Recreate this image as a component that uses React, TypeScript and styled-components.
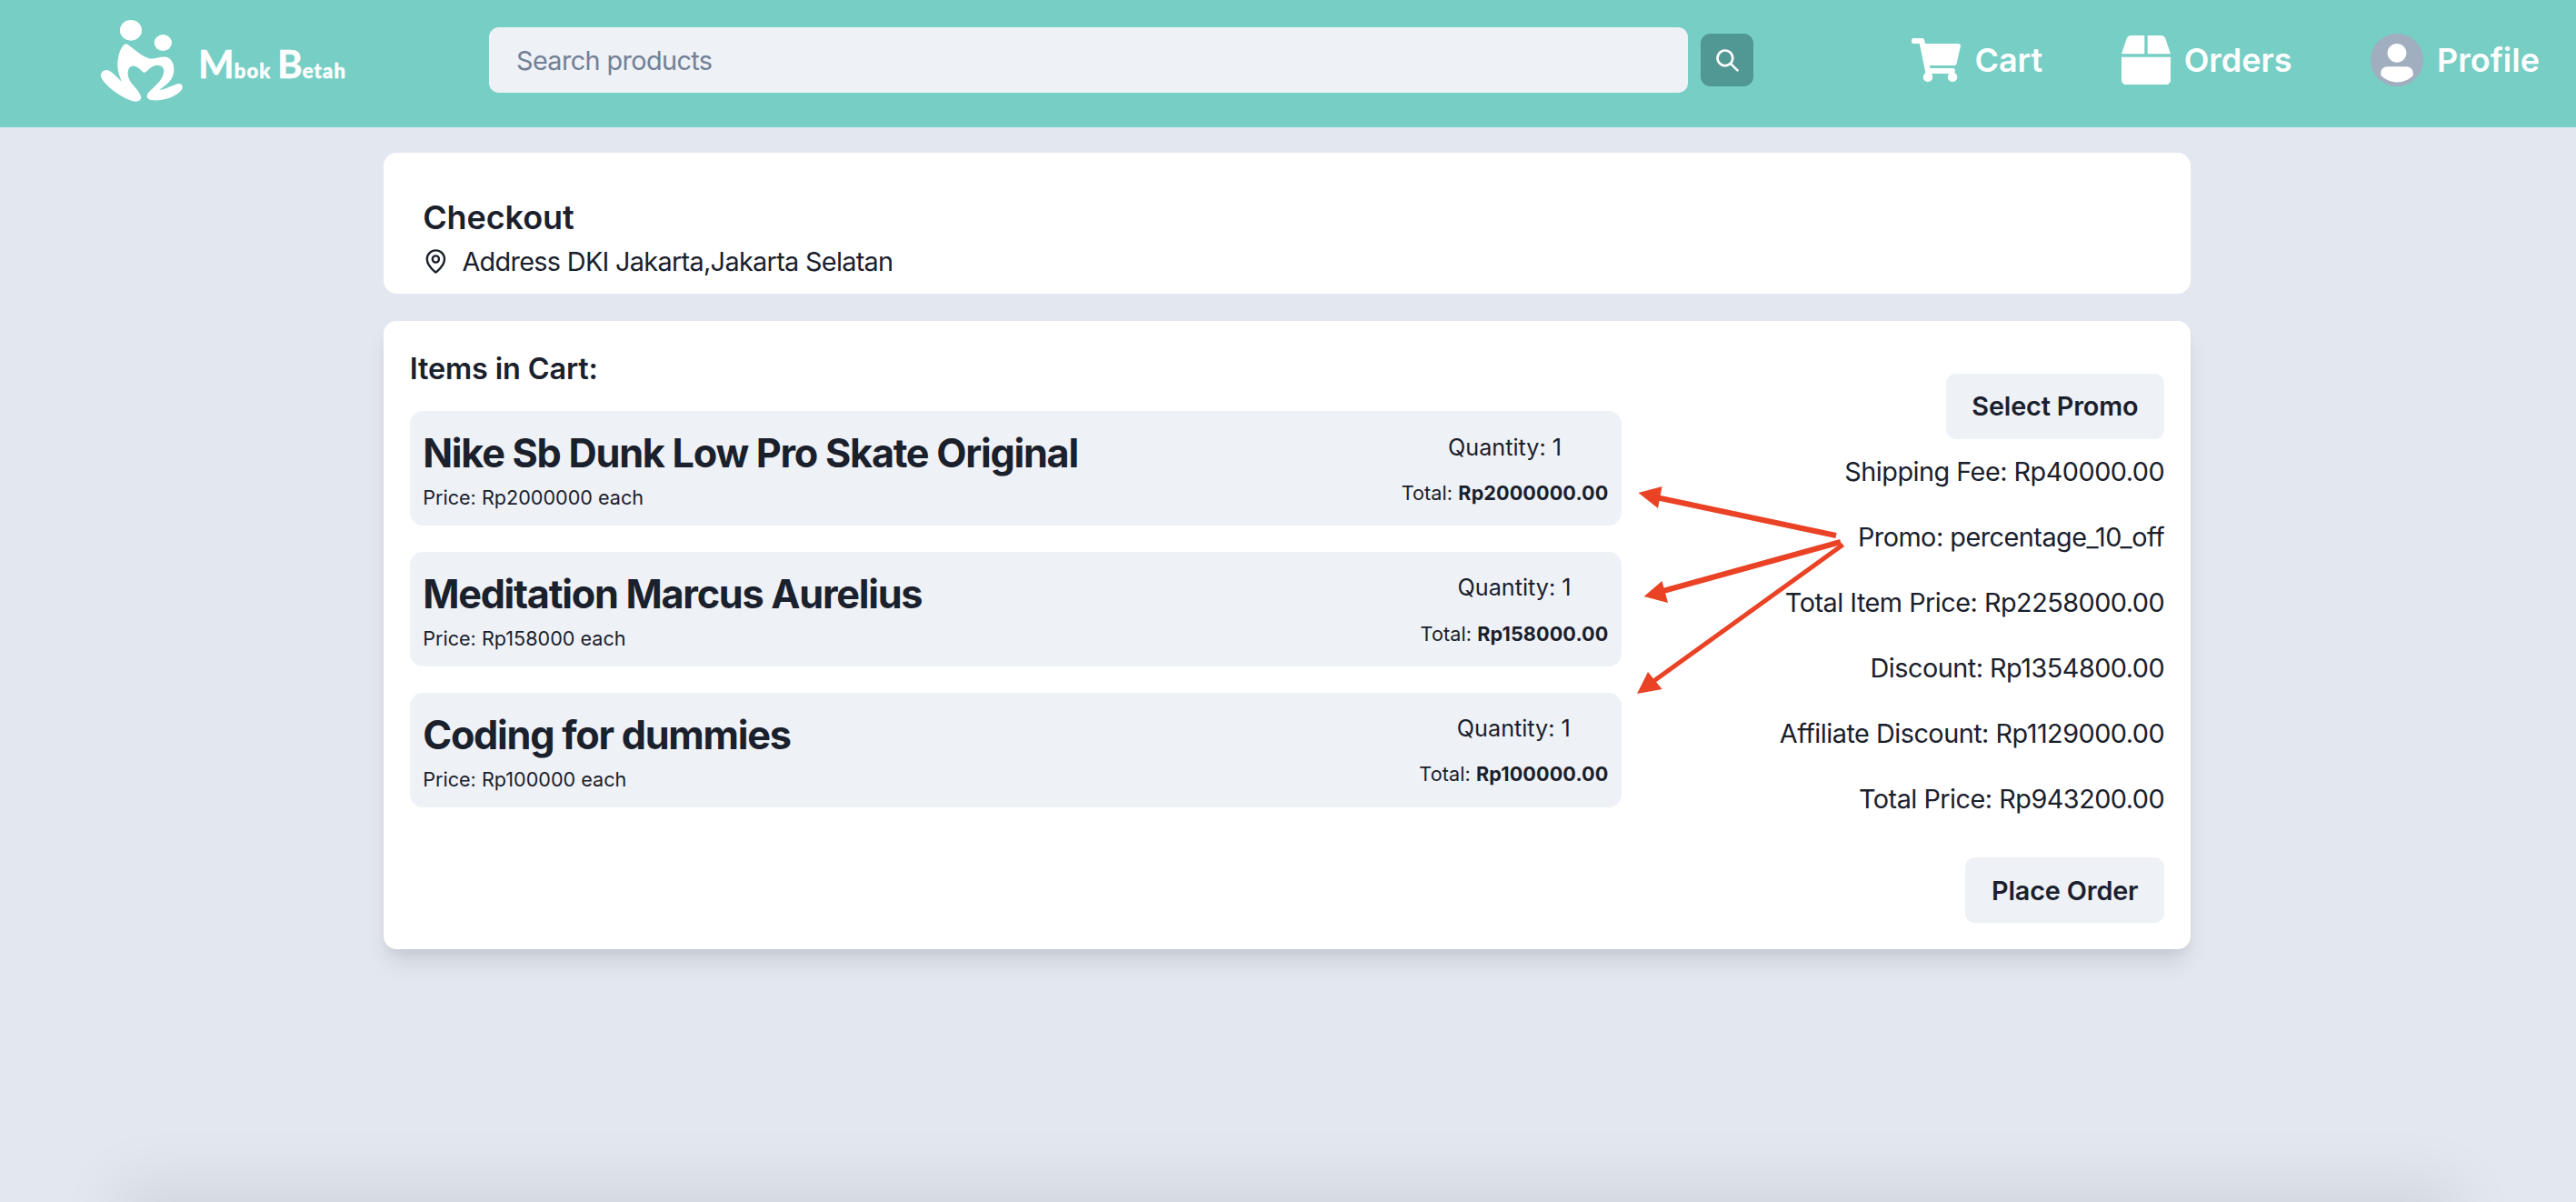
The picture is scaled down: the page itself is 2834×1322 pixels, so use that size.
import React from "react";
import styled, { createGlobalStyle } from "styled-components";
import { MapPin } from "lucide-react";
import { FaShoppingCart, FaBox } from "react-icons/fa";

const Global = createGlobalStyle`
  html, body { margin: 0; padding: 0; background: #e2e7f0; }
  body { font-family: Inter, "Liberation Sans", sans-serif; color: #1a202c; }
  * { box-sizing: border-box; }
`;

const Shell = styled.div`
  position: relative;
  height: 1322px;
  overflow: hidden;
  background: #e2e7f0;
`;
const Header = styled.header`
  display: flex;
  align-items: center;
  height: 140px;
  padding: 0 40px 8px 0;
  background: #76cec5;
`;
const Brand = styled.div`
  flex: 0 0 538px;
  display: flex;
  align-items: center;
  height: 110px;
  padding-left: 100px;
`;
const LogoMark = styled.svg`
  flex: none;
  width: 130px;
  height: 110px;
  fill: #fff;
`;
const Wordmark = styled.span`
  margin: 8px 0 0 -12px;
  font-family: Lato, sans-serif;
  font-weight: 900;
  font-size: 22px;
  letter-spacing: 1.2px;
  line-height: 1;
  color: #fff;
  white-space: nowrap;
  -webkit-text-stroke: 0.5px #fff;
`;
const WordCap = styled.span`
  font-size: 42px;
  font-weight: 700;
  letter-spacing: 0;
`;
const SearchGroup = styled.div`
  display: flex;
  align-items: center;
  gap: 14px;
`;
const SearchInput = styled.input`
  width: 1319px;
  height: 72px;
  padding: 0 30px;
  border: 0;
  border-radius: 10.8px;
  outline: none;
  background: #eef1f6;
  font: 400 28.8px Inter, sans-serif;
  letter-spacing: -0.6px;
  color: #1a202c;
  &::placeholder { color: #718096; opacity: 1; }
`;
const SearchButton = styled.button`
  display: flex;
  align-items: center;
  justify-content: center;
  width: 58px;
  height: 58px;
  padding: 0;
  border: 0;
  border-radius: 10.8px;
  background: #519793;
  color: #fff;
`;
const Nav = styled.nav`
  display: flex;
  align-items: center;
  gap: 86.4px;
  margin-left: auto;
`;
const NavItem = styled.a`
  display: flex;
  align-items: center;
  gap: 15px;
  font-size: 36px;
  font-weight: 600;
  line-height: 54px;
  color: #fff;
`;
const Avatar = styled.span`
  display: flex;
  width: 58px;
  height: 58px;
  overflow: hidden;
  border-radius: 50%;
  background: #a0aec0;
`;
const Main = styled.main`
  display: flex;
  flex-direction: column;
  gap: 30px;
  width: 1988px;
  height: 1182px;
  margin: 0 0 0 422px;
  padding-top: 28px;
`;
const AddressCard = styled.section`
  height: 155px;
  padding: 47px 43.2px 14.4px;
  border-radius: 14.4px;
  background: #fff;
`;
const PageTitle = styled.h1`
  margin: 0 0 3px;
  font-size: 36px;
  font-weight: 600;
  letter-spacing: -0.1px;
  line-height: 48px;
`;
const AddressRow = styled.div`
  display: flex;
  align-items: center;
  gap: 14.4px;
  font-size: 28.8px;
  letter-spacing: -0.67px;
  line-height: 43.2px;
`;
const CartCard = styled.section`
  display: flex;
  justify-content: space-between;
  height: 691px;
  padding: 28.8px;
  border-radius: 14.4px;
  background: #fff;
  box-shadow: 0 18px 27px -5.4px rgba(0, 0, 0, 0.1), 0 7px 11px -3.6px rgba(0, 0, 0, 0.05);
`;
const ItemsColumn = styled.div`
  width: 1333px;
`;
const SectionTitle = styled.h2`
  margin: 0 0 21.6px;
  font-size: 32.4px;
  font-weight: 600;
  letter-spacing: -0.15px;
  line-height: 48.6px;
`;
const ItemList = styled.div`
  display: flex;
  flex-direction: column;
  gap: 28.8px;
`;
const ItemRow = styled.article`
  display: flex;
  align-items: center;
  justify-content: space-between;
  padding: 14.4px;
  border-radius: 14.4px;
  background: #eef1f6;
`;
const ItemName = styled.h3`
  margin: 0;
  font-size: 43.2px;
  font-weight: 700;
  letter-spacing: -1.25px;
  line-height: 64.8px;
`;
const SmallText = styled.div`
  font-size: 21.6px;
  line-height: 32.4px;
`;
const ItemTotals = styled.div`
  display: flex;
  flex-direction: column;
  gap: 14.4px;
  padding-top: 2px;
  text-align: center;
  ${SmallText} { letter-spacing: 0.1px; }
`;
const Quantity = styled.div`
  font-size: 25.2px;
  line-height: 37.8px;
`;
const Summary = styled.aside`
  display: flex;
  flex-direction: column;
  align-items: flex-end;
  padding-top: 28.8px;
`;
const SummaryLines = styled.div`
  display: flex;
  flex-direction: column;
  gap: 28.8px;
  margin: 14.4px 0 43.2px;
  text-align: right;
  font-size: 28.8px;
  letter-spacing: -0.5px;
  line-height: 43.2px;
`;
const ActionButton = styled.button`
  height: 72px;
  padding: 0 28.8px;
  border: 0;
  border-radius: 10.8px;
  background: #eef1f6;
  font: 600 28.8px Inter, sans-serif;
  letter-spacing: -0.15px;
  color: #1a202c;
`;
const BelowFold = styled.footer`
  height: 80px;
  margin: 0 130px;
  background: #e2e7f0;
  box-shadow: 0 -20px 70px rgba(0, 0, 0, 0.08);
`;
const Annotation = styled.svg`
  position: absolute;
  top: 0;
  left: 0;
  width: 2834px;
  height: 1322px;
  pointer-events: none;
`;

const items = [
  { name: "Nike Sb Dunk Low Pro Skate Original", price: "2000000" },
  { name: "Meditation Marcus Aurelius", price: "158000" },
  { name: "Coding for dummies", price: "100000" },
];
const lines = [
  "Shipping Fee: Rp40000.00",
  "Promo: percentage_10_off",
  "Total Item Price: Rp2258000.00",
  "Discount: Rp1354800.00",
  "Affiliate Discount: Rp1129000.00",
  "Total Price: Rp943200.00",
];

export default function App() {
  return (
    <Shell>
      <Global />
      <Header>
        <Brand>
          <LogoMark viewBox="0 0 390 330" aria-hidden="true">
            <ellipse cx="132" cy="67" rx="36" ry="34" />
            <ellipse cx="238" cy="108" rx="29" ry="27" />
            <path d="M118 112 C132 118 160 150 192 160 C212 164 232 150 252 156 C272 164 278 190 272 212 C266 238 242 250 226 264 C248 262 272 246 290 243 C304 243 306 258 296 268 C272 292 234 300 204 298 C186 297 180 284 190 272 C206 254 240 232 241 200 C240 184 222 178 206 185 C194 190 184 204 176 207 C168 204 160 188 144 185 C126 182 118 200 124 222 C130 246 160 262 166 288 C166 300 152 304 138 301 C104 290 48 254 34 222 C28 206 44 192 60 200 C76 208 90 226 102 236 C92 214 84 190 90 158 C94 136 104 112 118 112 Z" />
          </LogoMark>
          <Wordmark>
            <WordCap>M</WordCap>bok <WordCap>B</WordCap>etah
          </Wordmark>
        </Brand>
        <SearchGroup>
          <SearchInput placeholder="Search products" />
          <SearchButton aria-label="Search">
            <svg viewBox="0 0 24 24" width="25" height="25" fill="currentColor" aria-hidden="true">
              <path d="M23.384,21.619,16.855,15.09a9.284,9.284,0,1,0-1.768,1.768l6.529,6.529a1.266,1.266,0,0,0,1.768,0A1.251,1.251,0,0,0,23.384,21.619ZM2.75,9.5a6.75,6.75,0,1,1,6.75,6.75A6.758,6.758,0,0,1,2.75,9.5Z" />
            </svg>
          </SearchButton>
        </SearchGroup>
        <Nav>
          <NavItem>
            <FaShoppingCart size={54} />
            Cart
          </NavItem>
          <NavItem>
            <FaBox size={54} />
            Orders
          </NavItem>
          <NavItem>
            <Avatar>
              <svg viewBox="0 0 128 128" width="58" height="58" fill="#fff" aria-hidden="true">
                <path d="M103,102.1388 C93.094,111.92 79.3504,118 64.1638,118 C48.8056,118 34.9294,111.768 25,101.7892 L25,95.2 C25,86.8096 31.981,80 40.6,80 L87.4,80 C96.019,80 103,86.8096 103,95.2 L103,102.1388 Z" />
                <path d="M63.9961 24 C51.2938 24 41 34.2943 41 46.9961 C41 59.7102 51.2938 70 63.9961 70 C76.6984 70 87 59.7102 87 46.9961 C87 34.2943 76.6984 24 63.9961 24 Z" />
              </svg>
            </Avatar>
            Profile
          </NavItem>
        </Nav>
      </Header>
      <Main>
        <AddressCard>
          <PageTitle>Checkout</PageTitle>
          <AddressRow>
            <MapPin size={28.8} strokeWidth={2} />
            Address DKI Jakarta,Jakarta Selatan
          </AddressRow>
        </AddressCard>
        <CartCard>
          <ItemsColumn>
            <SectionTitle>Items in Cart:</SectionTitle>
            <ItemList>
              {items.map((item) => (
                <ItemRow key={item.name}>
                  <div>
                    <ItemName>{item.name}</ItemName>
                    <SmallText>Price: Rp{item.price} each</SmallText>
                  </div>
                  <ItemTotals>
                    <Quantity>Quantity: 1</Quantity>
                    <SmallText>
                      Total: <b>Rp{item.price}.00</b>
                    </SmallText>
                  </ItemTotals>
                </ItemRow>
              ))}
            </ItemList>
          </ItemsColumn>
          <Summary>
            <ActionButton>Select Promo</ActionButton>
            <SummaryLines>
              {lines.map((line) => (
                <div key={line}>{line}</div>
              ))}
            </SummaryLines>
            <ActionButton>Place Order</ActionButton>
          </Summary>
        </CartCard>
      </Main>
      <BelowFold />
      <Annotation viewBox="0 0 2834 1322" aria-hidden="true">
        <g stroke="#ea4225" fill="#ea4225">
          <line x1="2020" y1="589" x2="1822" y2="547" strokeWidth="6" />
          <polygon points="1802.5,542 1828.5,535 1824,559" stroke="none" />
          <line x1="2025" y1="596" x2="1826" y2="651" strokeWidth="6" />
          <polygon points="1808.6,656 1828.5,639 1835,663" stroke="none" />
          <line x1="2027.6" y1="599" x2="1818" y2="750" strokeWidth="5" />
          <polygon points="1801,763 1813,739 1828.5,758" stroke="none" />
        </g>
      </Annotation>
    </Shell>
  );
}
